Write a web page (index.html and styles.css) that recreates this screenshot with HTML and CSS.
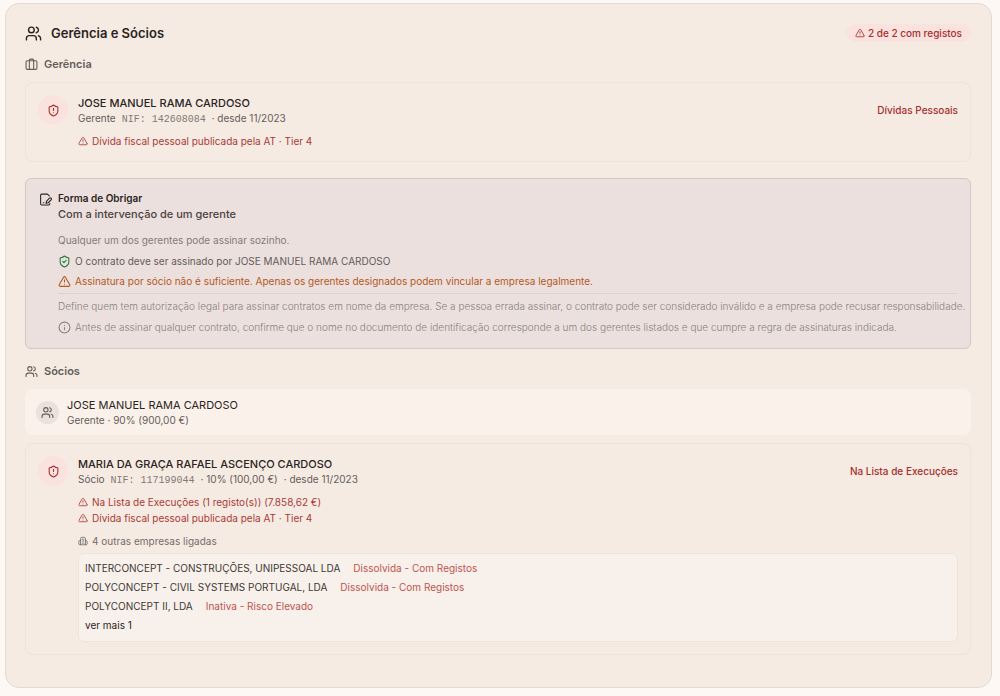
FILE: index.html
```html
<!DOCTYPE html>
<html lang="pt">
<head>
    <meta charset="UTF-8">
    <meta name="viewport" content="width=device-width, initial-scale=1.0">
    <title>Gerência e Sócios</title>
    <link rel="stylesheet" href="styles.css">
</head>
<body>

<!-- shared icons -->
<svg class="sprite" aria-hidden="true">
    <symbol id="users" viewBox="0 0 24 24">
        <path d="M16 21v-2a4 4 0 0 0-4-4H6a4 4 0 0 0-4 4v2"/>
        <circle cx="9" cy="7" r="4"/>
        <path d="M22 21v-2a4 4 0 0 0-3-3.87M16 3.13a4 4 0 0 1 0 7.75"/>
    </symbol>
    <symbol id="briefcase" viewBox="0 0 24 24">
        <path d="M16 20V4a2 2 0 0 0-2-2h-4a2 2 0 0 0-2 2v16"/>
        <rect x="2" y="5" width="20" height="16" rx="2"/>
    </symbol>
    <symbol id="triangle" viewBox="0 0 24 24">
        <path d="m21.73 18-8-14a2 2 0 0 0-3.48 0l-8 14A2 2 0 0 0 4 21h16a2 2 0 0 0 1.73-3M12 9v4M12 17h.01"/>
    </symbol>
    <symbol id="shield-alert" viewBox="0 0 24 24">
        <path d="M20 13c0 5-3.5 7.5-7.66 8.95a1 1 0 0 1-.67-.01C7.5 20.5 4 18 4 13V6a1 1 0 0 1 1-1c2 0 4.5-1.2 6.24-2.72a1.17 1.17 0 0 1 1.52 0C14.51 3.81 17 5 19 5a1 1 0 0 1 1 1zM12 8v4M12 16h.01"/>
    </symbol>
    <symbol id="shield-check" viewBox="0 0 24 24">
        <path d="M20 13c0 5-3.5 7.5-7.66 8.95a1 1 0 0 1-.67-.01C7.5 20.5 4 18 4 13V6a1 1 0 0 1 1-1c2 0 4.5-1.2 6.24-2.72a1.17 1.17 0 0 1 1.52 0C14.51 3.81 17 5 19 5a1 1 0 0 1 1 1zM9 12l2 2 4-4"/>
    </symbol>
    <symbol id="file-pen" viewBox="0 0 24 24">
        <path d="M20 19.5v.5a2 2 0 0 1-2 2H5a2 2 0 0 1-2-2V4a2 2 0 0 1 2-2h10.500L19 5.500"/>
        <path d="M8 18h1"/>
        <path d="M19.400 9.600a2 2 0 1 1 3 3L17 18l-4 1 1-4Z"/>
    </symbol>
    <symbol id="info" viewBox="0 0 24 24">
        <circle cx="12" cy="12" r="10"/>
        <path d="M12 16v-4M12 8h.01"/>
    </symbol>
    <symbol id="building" viewBox="0 0 24 24">
        <path d="M6 21V7a4 4 0 0 1 4-4h4a4 4 0 0 1 4 4v14M6 11H4a2 2 0 0 0-2 2v6a2 2 0 0 0 2 2h16a2 2 0 0 0 2-2v-6a2 2 0 0 0-2-2h-2M10 8h4M10 12h4M10 17h4"/>
    </symbol>
</svg>

<main class="panel">
    <header class="panel-header">
        <svg class="icon icon-lg"><use href="#users"/></svg>
        <h1>Gerência e Sócios</h1>
        <span class="badge"><svg class="icon icon-sm"><use href="#triangle"/></svg>2 de 2 com registos</span>
    </header>

    <section>
        <h2><svg class="icon icon-md"><use href="#briefcase"/></svg>Gerência</h2>
        <article class="card">
            <div class="avatar"><svg class="icon icon-md"><use href="#shield-alert"/></svg></div>
            <div class="card-body">
                <div class="card-top">
                    <div>
                        <h3>JOSE MANUEL RAMA CARDOSO</h3>
                        <p class="meta"><span>Gerente</span><span class="nif">NIF: 142608084</span><span>· desde 11/2023</span></p>
                    </div>
                    <span class="tag">Dívidas Pessoais</span>
                </div>
                <ul class="alerts">
                    <li><svg class="icon icon-sm"><use href="#triangle"/></svg>Dívida fiscal pessoal publicada pela AT · Tier 4</li>
                </ul>
            </div>
        </article>
    </section>

    <section class="binding">
        <svg class="icon icon-md binding-icon"><use href="#file-pen"/></svg>
        <div class="binding-body">
            <h4>Forma de Obrigar</h4>
            <p class="rule">Com a intervenção de um gerente</p>
            <p class="muted">Qualquer um dos gerentes pode assinar sozinho.</p>
            <p class="line"><svg class="icon icon-md green"><use href="#shield-check"/></svg>O contrato deve ser assinado por JOSE MANUEL RAMA CARDOSO</p>
            <p class="line warning"><svg class="icon icon-md"><use href="#triangle"/></svg>Assinatura por sócio não é suficiente. Apenas os gerentes designados podem vincular a empresa legalmente.</p>
            <hr>
            <p class="faint">Define quem tem autorização legal para assinar contratos em nome da empresa. Se a pessoa errada assinar, o contrato pode ser considerado inválido e a empresa pode recusar responsabilidade.</p>
            <p class="line faint"><svg class="icon icon-md"><use href="#info"/></svg>Antes de assinar qualquer contrato, confirme que o nome no documento de identificação corresponde a um dos gerentes listados e que cumpre a regra de assinaturas indicada.</p>
        </div>
    </section>

    <section>
        <h2><svg class="icon icon-md"><use href="#users"/></svg>Sócios</h2>
        <article class="partner">
            <div class="avatar avatar-small"><svg class="icon icon-md"><use href="#users"/></svg></div>
            <div>
                <h3>JOSE MANUEL RAMA CARDOSO</h3>
                <p class="meta">Gerente · 90% (900,00 €)</p>
            </div>
        </article>
        <article class="card">
            <div class="avatar"><svg class="icon icon-md"><use href="#shield-alert"/></svg></div>
            <div class="card-body">
                <div class="card-top">
                    <div>
                        <h3>MARIA DA GRAÇA RAFAEL ASCENÇO CARDOSO</h3>
                        <p class="meta"><span>Sócio</span><span class="nif">NIF: 117199044</span><span>· 10% (100,00 €)</span><span>· desde 11/2023</span></p>
                    </div>
                    <span class="tag">Na Lista de Execuções</span>
                </div>
                <ul class="alerts">
                    <li><svg class="icon icon-sm"><use href="#triangle"/></svg>Na Lista de Execuções (1 registo(s)) (7.858,62 €)</li>
                    <li><svg class="icon icon-sm"><use href="#triangle"/></svg>Dívida fiscal pessoal publicada pela AT · Tier 4</li>
                </ul>
                <p class="linked"><svg class="icon icon-sm"><use href="#building"/></svg>4 outras empresas ligadas</p>
                <ul class="companies">
                    <li><a href="#">INTERCONCEPT - CONSTRUÇÕES, UNIPESSOAL LDA</a><span class="status">Dissolvida - Com Registos</span></li>
                    <li><a href="#">POLYCONCEPT - CIVIL SYSTEMS PORTUGAL, LDA</a><span class="status">Dissolvida - Com Registos</span></li>
                    <li><a href="#">POLYCONCEPT II, LDA</a><span class="status">Inativa - Risco Elevado</span></li>
                    <li><button type="button">ver mais 1</button></li>
                </ul>
            </div>
        </article>
    </section>
</main>

</body>
</html>
```
FILE: styles.css
```css
* {
    margin: 0;
    padding: 0;
    box-sizing: border-box;
}

body {
    padding: 3px 8px 8px 5px;
    background-color: #fef8f4;
    color: #2b2422;
    font-family: "Inter", "Liberation Sans", sans-serif;
    font-size: 10px;
    line-height: 16px;
}

ul {
    list-style: none;
}

.sprite {
    display: none;
}

.icon {
    flex: none;
    fill: none;
    stroke: currentColor;
    stroke-width: 2;
    stroke-linecap: round;
    stroke-linejoin: round;
}

.icon-sm {
    width: 10px;
    height: 10px;
}

.icon-md {
    width: 13px;
    height: 13px;
}

.icon-lg {
    width: 17px;
    height: 17px;
}

.panel {
    padding: 20px 20px 32px 19px;
    border: 1px solid #e3d9d5;
    border-radius: 14px;
    background-color: #f5ebe3;
}

.panel-header {
    display: flex;
    align-items: center;
    gap: 9px;
    margin-bottom: 14px;
}

h1 {
    font-size: 13px;
    font-weight: 600;
    line-height: 18px;
}

h2 {
    display: flex;
    align-items: center;
    gap: 6px;
    margin-bottom: 10px;
    color: #655c59;
    font-size: 11px;
    font-weight: 600;
    line-height: 16px;
}

h3 {
    font-size: 11px;
    font-weight: 500;
    line-height: 16px;
}

.badge {
    display: flex;
    align-items: center;
    gap: 3px;
    margin-left: auto;
    padding: 1px 9px;
    border-radius: 9px;
    background-color: #fae3de;
    color: #a52f2f;
    font-weight: 500;
}

.card {
    display: flex;
    gap: 10px;
    padding: 12px;
    border: 1px solid #efe3db;
    border-radius: 8px;
}

.card-body {
    flex: 1;
    min-width: 0;
}

.card-top {
    display: flex;
    justify-content: space-between;
    align-items: center;
}

.avatar {
    display: flex;
    flex: none;
    justify-content: center;
    align-items: center;
    width: 30px;
    height: 30px;
    border-radius: 50%;
    background-color: #fae3de;
    color: #a52f2f;
}

.avatar-small {
    width: 23px;
    height: 23px;
    background-color: #eae1dd;
    color: #655c59;
}

.meta {
    display: flex;
    align-items: baseline;
    gap: 6px;
    color: #655c59;
    line-height: 14px;
}

.nif {
    color: #837975;
    font-family: "Liberation Mono", monospace;
    line-height: 10px;
}

.tag {
    color: #a52f2f;
    font-weight: 500;
}

.alerts {
    margin-top: 8px;
    color: #a93a37;
}

.alerts li,
.linked,
.line {
    display: flex;
    align-items: center;
    gap: 4px;
}

.binding {
    display: flex;
    gap: 6px;
    margin: 16px 0 14px;
    padding: 12px 4px 13px 13px;
    border: 1px solid #d3c8c6;
    border-radius: 6px;
    background-color: #ebe0dd;
}

.binding-icon {
    margin-top: 2px;
}

.binding-body {
    flex: 1;
    min-width: 0;
}

h4 {
    font-size: 10px;
    font-weight: 600;
    line-height: 14px;
}

.rule {
    margin-bottom: 9px;
    color: #4a4240;
    font-size: 11px;
    font-weight: 500;
    line-height: 18px;
}

.muted {
    margin-bottom: 5px;
    color: #857b78;
}

.line {
    color: #655c59;
}

.line + .line {
    margin-top: 4px;
}

.green {
    color: #237a3f;
}

.warning {
    color: #b5591f;
}

hr {
    margin: 4px 9px 4px 0;
    border: 0;
    border-top: 1px solid #dcd1ce;
}

.faint {
    color: #8b817e;
    font-weight: 300;
}

.faint + .faint {
    margin-top: 5px;
}

.partner {
    display: flex;
    align-items: center;
    gap: 8px;
    margin-bottom: 8px;
    padding: 8px 11px;
    border-radius: 8px;
    background-color: #f9f1ea;
}

.partner h3 {
    font-weight: 400;
}

.linked {
    margin-top: 7px;
    color: #766c69;
}

.companies {
    margin-top: 4px;
    padding: 5px 6px 6px;
    border: 1px solid #f0e5dd;
    border-radius: 6px;
    background-color: #f8f0ea;
    line-height: 19px;
}

.companies li {
    display: flex;
    gap: 13px;
}

.companies a {
    color: #403836;
    text-decoration: none;
}

.companies button {
    border: 0;
    background: none;
    color: inherit;
    font: inherit;
    cursor: pointer;
}

.status {
    color: #bd5550;
}
```
